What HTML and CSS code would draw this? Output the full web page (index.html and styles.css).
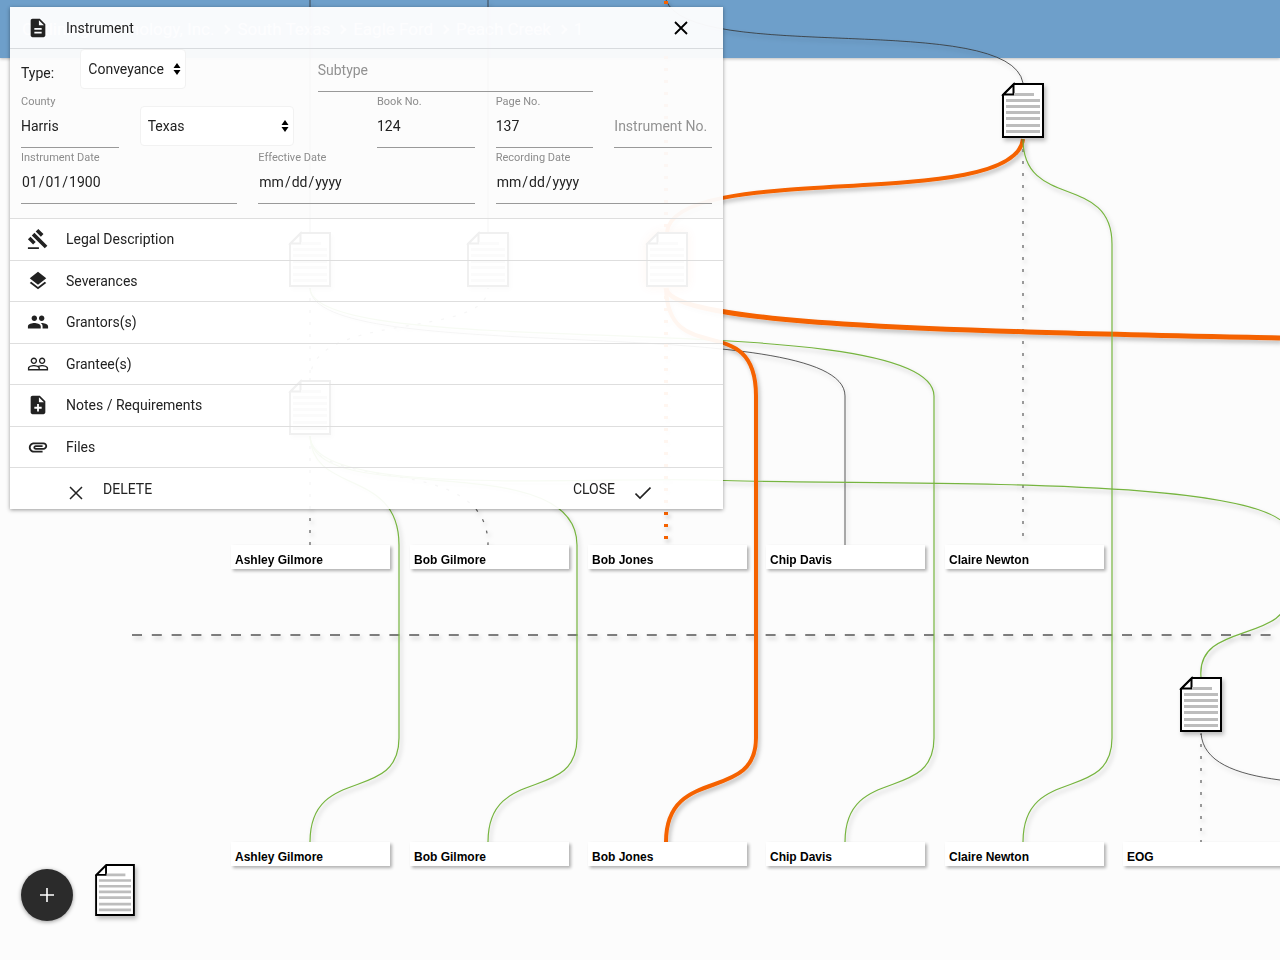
FILE: index.html
```html
<!DOCTYPE html>
<html lang="en">
<head>
<meta charset="utf-8">
<title>Instrument</title>
<link rel="stylesheet" href="styles.css">
</head>
<body>
<header class="topbar">
  <nav class="crumbs" aria-label="Breadcrumb">
    <a href="#">Outlining Technology, Inc.</a><span class="chevron"></span><a href="#">South Texas</a><span class="chevron"></span><a href="#">Eagle Ford</a><span class="chevron"></span><a href="#">Peach Creek</a><span class="chevron"></span><a href="#">1</a>
  </nav>
</header>

<main class="canvas">
  <svg class="links" aria-hidden="true">
    <defs>
      <filter id="shade" filterUnits="userSpaceOnUse" x="0" y="0" width="1400" height="960">
        <feDropShadow dx="2" dy="3" stdDeviation="2" flood-color="#000" flood-opacity=".25"/>
      </filter>
      <filter id="glow" x="-50%" y="-50%" width="200%" height="200%">
        <feDropShadow dx="0" dy="0" stdDeviation="6" flood-color="#f56200" flood-opacity=".9"/>
      </filter>
      <symbol id="doc" viewBox="0 0 42 55" overflow="visible">
        <path d="M12 1H41V54H1V12Z" fill="#fff" stroke="#000" stroke-width="2"/>
        <path d="M1.500 11.500H11.500V1.500Z" fill="#fff" stroke="#000" stroke-width="2"/>
        <path d="M12 11.500H32M4 17.500H38M4 23.500H38M4 29.500H38M4 35.500H38M4 42.500H38M4 48.500H38" stroke="#bdbdbd" stroke-width="2.800"/>
      </symbol>
    </defs>
    <g filter="url(#shade)" fill="none">
      <g class="thin">
        <path d="M310 0V232M488 0V232"/>
        <path d="M666 0C690 65 1010 10 1023 83"/>
        <path d="M310 288C312 368 845 310 845 396V545"/>
        <path d="M1201 733C1203 762 1235 774 1280 780"/>
      </g>
      <g class="dotted">
        <path d="M1023 139V545M310 288V380M310 436V545M488 288C488 340 310 310 310 380M310 436C312 495 488 450 488 545M1201 734V843"/>
      </g>
      <path class="divider" d="M132 635H1272"/>
      <g class="green">
        <path d="M310 288C312 364 934 304 934 396V738C934 804 845 764 845 842"/>
        <path d="M310 436C312 495 399 468 399 545V738C399 804 310 764 310 842"/>
        <path d="M310 436C312 510 577 445 577 545V738C577 804 488 764 488 842"/>
        <path d="M310 436C312 500 600 475 724 480.500C900 486 1290 474 1290 535V590C1290 645 1196 620 1201 677"/>
      </g>
      <g class="orange">
        <path d="M1023 139C1015 213 675 160 667 232"/>
        <path d="M666 288C668 370 756 308 756 396V738C756 804 666 764 666 842"/>
        <path class="heavy" d="M666 288C670 326 960 331 1280 338"/>
        <path class="orange-dots" d="M666 48V545"/>
        <path d="M666 1V4"/>
      </g>
      <path class="green" d="M1023 139C1023 210 1112 173 1112 244V738C1112 804 1023 764 1023 842"/>
    </g>
    <g filter="url(#shade)">
      <use href="#doc" x="1002" y="83" width="42" height="55"/>
      <use href="#doc" x="1180" y="677" width="42" height="55"/>
      <use href="#doc" x="289" y="232" width="42" height="55"/>
      <use href="#doc" x="467" y="232" width="42" height="55"/>
      <use href="#doc" x="289" y="380" width="42" height="55"/>
    </g>
    <use href="#doc" x="646" y="232" width="42" height="55" filter="url(#glow)"/>
  </svg>

  <div class="owner col1 upper">Ashley Gilmore</div>
  <div class="owner col2 upper">Bob Gilmore</div>
  <div class="owner col3 upper">Bob Jones</div>
  <div class="owner col4 upper">Chip Davis</div>
  <div class="owner col5 upper">Claire Newton</div>
  <div class="owner col1 lower">Ashley Gilmore</div>
  <div class="owner col2 lower">Bob Gilmore</div>
  <div class="owner col3 lower">Bob Jones</div>
  <div class="owner col4 lower">Chip Davis</div>
  <div class="owner col5 lower">Claire Newton</div>
  <div class="owner col6 lower">EOG</div>

  <div class="tools">
    <button class="add" aria-label="Add"><svg width="14" height="14" viewBox="0 0 14 14"><path d="M7 0V14M0 7H14" stroke="#fff" stroke-width="1.600"/></svg></button>
    <button class="new-doc" aria-label="New document"><svg width="40" height="52" viewBox="0 0 42 55"><use href="#doc" width="42" height="55"/></svg></button>
  </div>
</main>

<section class="panel" aria-labelledby="panel-title">
  <div class="panel-head">
    <svg class="icon" viewBox="0 0 24 24"><path d="M14 2H6c-1.100 0-2 .9-2 2v16c0 1.100.9 2 2 2h12c1.100 0 2-.9 2-2V8zm2 16H8v-2h8zm0-4H8v-2h8zm-3-5V3.500L18.500 9z"/></svg>
    <h1 class="title" id="panel-title">Instrument</h1>
    <button class="dismiss" aria-label="Close panel"><svg width="14" height="14" viewBox="0 0 14 14"><path d="M1 1L13 13M13 1L1 13" stroke="#000" stroke-width="1.800"/></svg></button>
  </div>
  <form class="form">
    <label class="type-label" for="type">Type:</label>
    <div class="select-wrap type"><select id="type"><option>Conveyance</option></select><svg class="arrows" viewBox="0 0 8 12"><path d="M4 0L7.500 5H.5ZM4 12L.5 7H7.500Z"/></svg></div>
    <input class="field subtype" type="text" placeholder="Subtype" aria-label="Subtype">

    <div class="cell county"><label for="county">County</label><input class="field" id="county" type="text" value="Harris"></div>
    <div class="select-wrap state"><select aria-label="State"><option>Texas</option></select><svg class="arrows" viewBox="0 0 8 12"><path d="M4 0L7.500 5H.5ZM4 12L.5 7H7.500Z"/></svg></div>
    <div class="cell book"><label for="book">Book No.</label><input class="field" id="book" type="text" value="124"></div>
    <div class="cell page"><label for="page">Page No.</label><input class="field" id="page" type="text" value="137"></div>
    <input class="field number" type="text" placeholder="Instrument No." aria-label="Instrument No.">

    <div class="cell date1"><label for="idate">Instrument Date</label><input class="field" id="idate" type="date" value="1900-01-01"></div>
    <div class="cell date2"><label for="edate">Effective Date</label><input class="field" id="edate" type="date"></div>
    <div class="cell date3"><label for="rdate">Recording Date</label><input class="field" id="rdate" type="date"></div>
  </form>
  <div class="sections">
    <button class="row"><svg class="icon" viewBox="0 0 24 24"><path d="M1 21h12v2H1zM5.245 8.070l2.830-2.827 14.140 14.142-2.828 2.828zM12.317 1l5.657 5.656-2.830 2.830-5.654-5.660zM3.825 9.485l5.657 5.657-2.828 2.828-5.657-5.657z"/></svg>Legal Description</button>
    <button class="row"><svg class="icon" viewBox="0 0 24 24"><path d="M11.990 18.540l-7.370-5.730L3 14.070l9 7 9-7-1.630-1.270zM12 16l7.360-5.730L21 9l-9-7-9 7 1.630 1.270z"/></svg>Severances</button>
    <button class="row"><svg class="icon" viewBox="0 0 24 24"><path d="M16 11c1.660 0 2.990-1.340 2.990-3S17.660 5 16 5s-3 1.340-3 3 1.340 3 3 3zm-8 0c1.660 0 2.990-1.340 2.990-3S9.660 5 8 5 5 6.340 5 8s1.340 3 3 3zm0 2c-2.330 0-7 1.170-7 3.500V19h14v-2.500c0-2.330-4.670-3.500-7-3.500zm8 0c-.29 0-.62.020-.97.050 1.160.84 1.970 1.970 1.970 3.450V19h6v-2.500c0-2.330-4.670-3.500-7-3.500z"/></svg>Grantors(s)</button>
    <button class="row"><svg class="icon" viewBox="0 0 24 24"><path d="M16.500 13c-1.200 0-3.070.34-4.500 1-1.430-.67-3.300-1-4.500-1C5.330 13 1 14.080 1 16.250V19h22v-2.750c0-2.170-4.330-3.250-6.500-3.250zm-4 4.500h-10v-1.250c0-.54 2.560-1.750 5-1.750s5 1.210 5 1.750zm9 0H14v-1.250c0-.46-.2-.86-.52-1.220.88-.3 1.960-.53 3.020-.53 2.440 0 5 1.210 5 1.750zM7.500 12c1.930 0 3.500-1.570 3.500-3.500S9.430 5 7.500 5 4 6.570 4 8.500 5.570 12 7.500 12zm0-5.500c1.100 0 2 .9 2 2s-.9 2-2 2-2-.9-2-2 .9-2 2-2zm9 5.500c1.930 0 3.500-1.570 3.500-3.500S18.430 5 16.500 5 13 6.570 13 8.500s1.570 3.500 3.500 3.500zm0-5.500c1.100 0 2 .9 2 2s-.9 2-2 2-2-.9-2-2 .9-2 2-2z"/></svg>Grantee(s)</button>
    <button class="row"><svg class="icon" viewBox="0 0 24 24"><path d="M14 2H6c-1.100 0-2 .9-2 2v16c0 1.100.9 2 2 2h12c1.100 0 2-.9 2-2V8zm2 14h-3v3h-2v-3H8v-2h3v-3h2v3h3zm-3-7V3.500L18.500 9z"/></svg>Notes / Requirements</button>
    <button class="row"><svg class="icon" viewBox="0 0 24 24"><path d="M2 12.500C2 9.460 4.460 7 7.500 7H18c2.210 0 4 1.790 4 4s-1.790 4-4 4H9.500C8.120 15 7 13.880 7 12.500S8.120 10 9.500 10H17v2H9.410c-.55 0-.55 1 0 1H18c1.100 0 2-.9 2-2s-.9-2-2-2H7.500C5.570 9 4 10.570 4 12.500S5.570 16 7.500 16H17v2H7.500C4.460 18 2 15.540 2 12.500z"/></svg>Files</button>
  </div>
  <div class="actions">
    <button class="action"><svg width="14" height="14" viewBox="0 0 14 14"><path d="M1 1L13 13M13 1L1 13" stroke="#222" stroke-width="1.500"/></svg><span>DELETE</span></button>
    <button class="action"><span>CLOSE</span><svg width="16" height="14" viewBox="0 0 16 14"><path d="M.5 7.500L5 12L15.500 1.500" fill="none" stroke="#222" stroke-width="1.600"/></svg></button>
  </div>
</section>
</body>
</html>
```
FILE: styles.css
```css
* { box-sizing: border-box; }

body {
  margin: 0;
  min-height: 100vh;
  background: #fcfcfc;
  color: #222;
  font: 14px/20px Roboto, "Liberation Sans", sans-serif;
  position: relative;
  overflow: hidden;
}

button, input, select { font: inherit; color: inherit; background: none; border: 0; margin: 0; padding: 0; }
button { cursor: pointer; }

.topbar {
  height: 58px;
  padding: 0 22px;
  display: flex;
  align-items: center;
  background: #6e9fca;
  box-shadow: 0 1px 3px rgba(0, 0, 0, .25);
}
.crumbs { display: flex; align-items: center; gap: 8px; font-size: 17px; color: #fff; }
.crumbs a { color: #fff; text-decoration: none; }
.chevron {
  width: 7px;
  height: 7px;
  border-top: 2px solid #fff;
  border-right: 2px solid #fff;
  transform: rotate(45deg);
}

/* Title-chain drawing */
.canvas { position: absolute; inset: 0; }
.links { position: absolute; inset: 0; width: 100%; height: 100%; }
.thin { stroke: #333; stroke-opacity: .8; stroke-width: 1; }
.dotted { stroke: #666; stroke-width: 1.3; stroke-dasharray: 3 9; stroke-dashoffset: 2; }
.divider { stroke: #555; stroke-width: 1.6; stroke-dasharray: 10 9.8; }
.green { stroke: #76b43f; stroke-width: 1.2; }
.orange { stroke: #f56200; stroke-width: 4; }
.heavy { stroke-width: 5; }
.orange-dots { stroke-dasharray: 3 9; stroke-dashoffset: 4; }

.owner {
  position: absolute;
  width: 159px;
  padding: 8px 4px 2px;
  background: #fff;
  box-shadow: 2px 2px 3px rgba(0, 0, 0, .3);
  color: #000;
  font: bold 12px/14px "Liberation Sans", sans-serif;
}
.upper { top: 545px; }
.lower { top: 842px; }
.col1 { left: 231px; }
.col2 { left: 410px; }
.col3 { left: 588px; }
.col4 { left: 766px; }
.col5 { left: 945px; }
.col6 { left: 1123px; }

.tools { position: absolute; left: 21px; top: 864px; display: flex; align-items: flex-start; gap: 22px; }
.add {
  width: 52px;
  height: 52px;
  margin-top: 5px;
  border-radius: 50%;
  background: #2b2b2b;
  box-shadow: 0 1px 4px rgba(0, 0, 0, .4);
  display: grid;
  place-items: center;
}
.new-doc { filter: drop-shadow(2px 3px 2px rgba(0, 0, 0, .25)); }
.new-doc svg { display: block; }

/* Instrument panel */
.panel {
  position: absolute;
  left: 10px;
  top: 7px;
  width: 713px;
  background: rgba(255, 255, 255, .94);
  box-shadow: 0 1px 4px rgba(0, 0, 0, .4);
}
.panel-head {
  height: 42px;
  padding: 0 34px 0 17px;
  display: flex;
  align-items: center;
  gap: 17px;
  background: rgba(250, 251, 253, .4);
  border-bottom: 1px solid #d8dbde;
}
.icon { width: 22px; height: 22px; flex: none; fill: #222; }
.title { margin: 0; flex: 1; font-size: 14px; font-weight: 400; }
.dismiss { display: grid; place-items: center; width: 16px; height: 16px; }

.form {
  display: grid;
  grid-template-columns: repeat(12, minmax(0, 1fr));
  column-gap: 21px;
  grid-template-rows: 43px 56px 56px;
  padding: 0 11px 14px;
  background: rgba(248, 248, 248, .4);
}
.type-label { grid-column: 1 / 3; grid-row: 1; padding-top: 14px; }
.type { grid-column: 2 / 4; grid-row: 1; width: 106px; height: 40px; }
.subtype { grid-column: 6 / 11; grid-row: 1; }
.county { grid-column: 1 / 3; }
.state { grid-column: 3 / 6; height: 40px; margin: 14px 3px 0 0; }
.book { grid-column: 7 / 9; }
.page { grid-column: 9 / 11; }
.number { grid-column: 11 / 13; }
.date1 { grid-column: 1 / 5; }
.date2 { grid-column: 5 / 9; }
.date3 { grid-column: 9 / 13; }

.cell { display: flex; flex-direction: column; justify-content: flex-end; min-width: 0; }
.cell label { font-size: 11px; line-height: 12px; color: #8c8c8c; }
.field { width: 100%; min-width: 0; height: 40px; border-bottom: 1px solid #999; border-radius: 0; outline: 0; }
.cell .field { padding-bottom: 4px; }
.form > .field { align-self: end; padding-bottom: 4px; }
.field::placeholder { color: #929292; opacity: 1; }
.field::-webkit-calendar-picker-indicator { display: none; }

.select-wrap { position: relative; }
.select-wrap select {
  appearance: none;
  width: 100%;
  height: 100%;
  padding: 0 20px 0 7px;
  background: #fff;
  border: 1px solid #f2f2f2;
  border-radius: 4px;
}
.arrows { position: absolute; right: 5px; top: 14px; width: 8px; height: 12px; pointer-events: none; }

.sections { display: grid; }
.row {
  height: 41px;
  padding: 0 17px 1px;
  display: flex;
  align-items: center;
  gap: 17px;
  text-align: left;
  border-top: 1px solid #dedede;
}
.row:nth-child(odd) { height: 42px; }

.actions {
  height: 42px;
  padding: 0 72px 0 59px;
  display: flex;
  justify-content: space-between;
  border-top: 1px solid #dedede;
}
.action { display: flex; align-items: center; gap: 20px; }
.action svg { margin-top: 8px; }
```
